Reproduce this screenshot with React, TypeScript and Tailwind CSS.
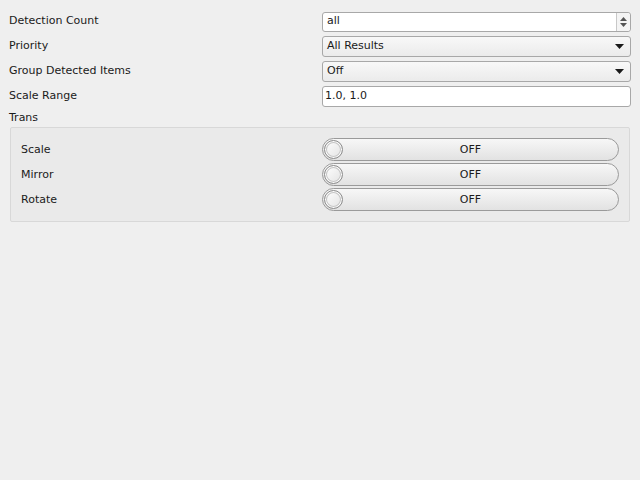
import React from "react";

const font = { fontFamily: '"DejaVu Sans", sans-serif' };

function Caret() {
  return (
    <svg width="9" height="5" viewBox="0 0 9 5" className="mr-[6px]">
      <path d="M0 0 L9 0 L4.5 5 Z" fill="#1a1a1a" />
    </svg>
  );
}

function Toggle() {
  return (
    <div className="relative flex h-[23px] w-[297px] items-center justify-center rounded-full border border-[#9a9a9a] bg-gradient-to-b from-[#f7f7f7] to-[#e2e2e2]">
      <div className="absolute left-[1px] top-[1px] h-[19px] w-[19px] rounded-full border border-[#8c8c8c] bg-gradient-to-br from-[#ffffff] to-[#e2e2e2] shadow-[inset_0_0_0_1px_#ffffff,inset_0_0_0_2px_#c4c4c4]" />
      <span className="pt-[2px] text-[11px] text-[#1a1a1a]">OFF</span>
    </div>
  );
}

export default function App() {
  return (
    <div className="h-[480px] w-[640px] bg-[#efefef] text-[11px] text-[#1a1a1a]" style={font}>
      <div className="flex flex-col gap-[4px] pl-[9px] pr-[9px] pt-[11px]">
        <div className="flex h-[21px] items-center">
          <div className="flex-1">Detection Count</div>
          <div className="flex h-[20px] w-[309px] items-center rounded-[3px] border border-[#a8a8a8] bg-white">
            <span className="flex-1 pl-[4px]">all</span>
            <div className="flex h-full w-[14px] flex-col items-center justify-center gap-[2px] rounded-r-[3px] border-l border-[#c8c8c8] bg-[#f4f4f4]">
              <svg width="7" height="4" viewBox="0 0 7 4"><path d="M0 4 L7 4 L3.5 0 Z" fill="#555" /></svg>
              <svg width="7" height="4" viewBox="0 0 7 4"><path d="M0 0 L7 0 L3.5 4 Z" fill="#555" /></svg>
            </div>
          </div>
        </div>
        <div className="flex h-[21px] items-center">
          <div className="flex-1">Priority</div>
          <div className="flex h-[21px] w-[309px] items-center justify-between rounded-[3px] border border-[#a8a8a8] bg-gradient-to-b from-[#f8f8f8] to-[#ebebeb] pl-[4px]">
            <span>All Results</span>
            <Caret />
          </div>
        </div>
        <div className="flex h-[21px] items-center">
          <div className="flex-1">Group Detected Items</div>
          <div className="flex h-[21px] w-[309px] items-center justify-between rounded-[3px] border border-[#a8a8a8] bg-gradient-to-b from-[#f8f8f8] to-[#ebebeb] pl-[4px]">
            <span>Off</span>
            <Caret />
          </div>
        </div>
        <div className="flex h-[21px] items-center">
          <div className="flex-1">Scale Range</div>
          <div className="flex h-[21px] w-[309px] items-center rounded-[3px] border border-[#a8a8a8] bg-white pl-[2px]">
            <span>1.0, 1.0</span>
          </div>
        </div>
      </div>
      <div className="pl-[9px] pt-[4px] leading-[14px]">Trans</div>
      <div className="ml-[10px] mt-[2px] w-[620px] rounded-[2px] border border-[#d8d8d8] bg-[#eaeaea] pb-[10px] pl-[10px] pr-[10px] pt-[10px]">
        <div className="flex flex-col gap-[2px]">
          {["Scale", "Mirror", "Rotate"].map((l) => (
            <div key={l} className="flex h-[23px] items-center">
              <div className="flex-1 pt-[2px]">{l}</div>
              <Toggle />
            </div>
          ))}
        </div>
      </div>
    </div>
  );
}
